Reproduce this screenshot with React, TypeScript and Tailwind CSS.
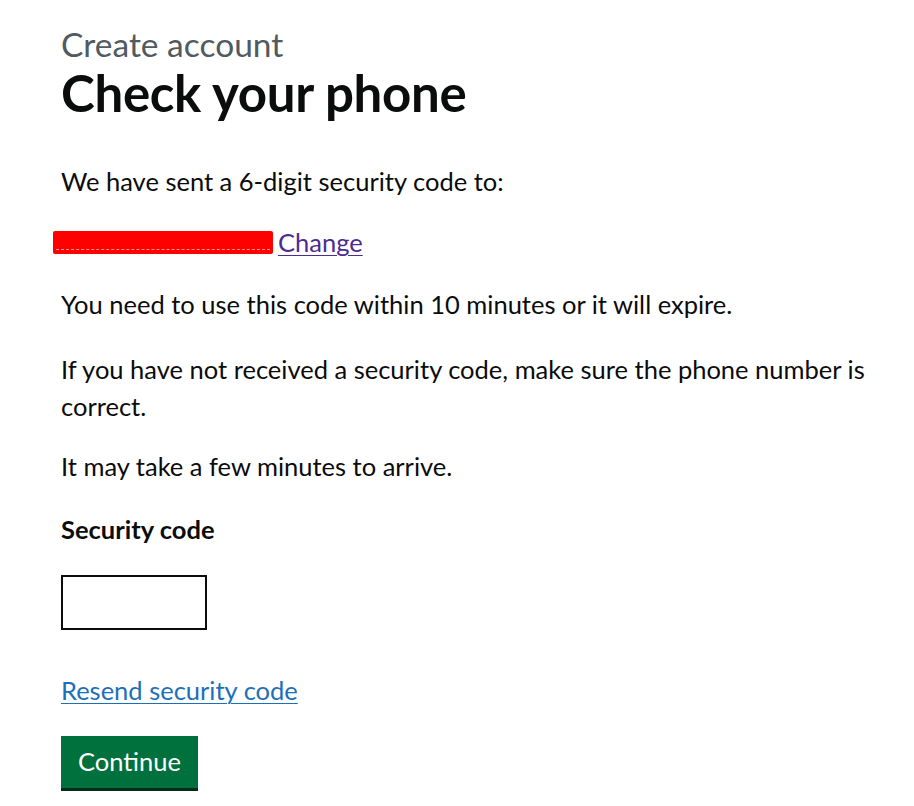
import React from "react";

export default function App() {
  return (
    <div className="min-h-[806px] bg-white text-[#0b0c0c] [font-family:Lato,'Noto_Sans',sans-serif]">
      <main className="pl-[61px] pr-6 pt-[24px]">
        <span className="block text-[33.5px] leading-[40px] text-[#505a5f]">Create account</span>
        <h1 className="mt-[3px] text-[51px] font-bold leading-[52px] tracking-[-0.3px]">Check your phone</h1>

        <p className="mt-[44px] text-[25.5px] leading-[37px]">We have sent a 6-digit security code to:</p>

        <p className="mt-[24px] flex items-center text-[25.5px] leading-[37px]">
          <span className="-ml-[8px] mr-[5px] flex h-[23px] w-[220px] items-end rounded-[2px] bg-[#ff0000] px-[3px] pb-[4px]">
            <span className="h-px w-full border-b border-dashed border-[#ff9a9a]" />
          </span>
          <a href="#" className="text-[#4c2c92] underline decoration-1 underline-offset-[3px]">
            Change
          </a>
        </p>

        <p className="mt-[25px] text-[25.5px] leading-[37px]">
          You need to use this code within 10 minutes or it will expire.
        </p>

        <p className="mt-[28px] max-w-[830px] text-[25.5px] leading-[37px]">
          If you have not received a security code, make sure the phone number is correct.
        </p>

        <p className="mt-[23px] text-[25.5px] leading-[37px]">It may take a few minutes to arrive.</p>

        <label className="mt-[26px] block text-[25.5px] font-bold leading-[37px]">Security code</label>
        <input
          type="text"
          className="mt-[27px] block h-[55px] w-[146px] border-2 border-[#0b0c0c] bg-white px-2 text-[25px] outline-none"
        />

        <a
          href="#"
          className="mt-[42px] inline-block text-[25.5px] leading-[37px] text-[#1d70b8] underline decoration-1 underline-offset-[3px]"
        >
          Resend security code
        </a>

        <div className="mt-[27px]">
          <button className="h-[52px] w-[137px] bg-[#00703c] text-[25.5px] leading-none text-white shadow-[0_3px_0_#002d18]">
            Continue
          </button>
        </div>
      </main>
    </div>
  );
}
